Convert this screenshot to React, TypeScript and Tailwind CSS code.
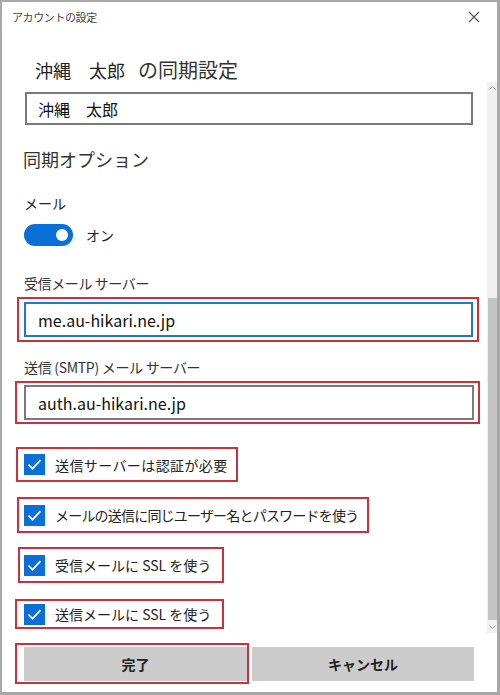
import React from 'react'

// Account sync settings dialog (mail server options)

const font = { fontFamily: '"Noto Sans CJK JP", "Noto Sans", sans-serif' }

function CheckIcon() {
  return (
    <svg width="21" height="21" viewBox="0 0 21 21" className="shrink-0">
      <rect width="21" height="21" fill="#0a6fd6" />
      <path d="M4.5 10.5l4 4.2 8-8.5" fill="none" stroke="#fff" strokeWidth="1.7" />
    </svg>
  )
}

function CloseIcon() {
  return (
    <svg width="12" height="12" viewBox="0 0 12 12">
      <path d="M1 1l10 10M11 1L1 11" stroke="#555" strokeWidth="1.2" />
    </svg>
  )
}

interface CheckRowProps {
  label: string
  className: string
  textClass?: string
}

function CheckRow({ label, className, textClass = '' }: CheckRowProps) {
  return (
    <div className={`flex items-center border-2 border-[#c8333b] gap-[10px] self-start shrink-0 ${className}`}>
      <CheckIcon />
      <span className={`text-[14px] leading-[20px] text-[#222] whitespace-nowrap ${textClass}`}>{label}</span>
    </div>
  )
}

export default function App() {
  return (
    <div
      className="w-[500px] h-[695px] bg-white border-2 border-r-[3px] border-b-[3px] border-[#a8a8a8] flex flex-col overflow-hidden"
      style={font}
    >
      {/* title bar */}
      <div className="h-[30px] flex items-center justify-between pl-[10px] pr-[17px] shrink-0">
        <span className="text-[11px] text-[#444] tracking-[-0.4px]">アカウントの設定</span>
        <CloseIcon />
      </div>

      {/* heading */}
      <div className="h-[50px] pt-[26px] pl-[33px] shrink-0">
        <div className="leading-[24px] text-[#222] whitespace-nowrap flex items-baseline">
          <span className="text-[18px]">沖縄　太郎</span>
          <span className="text-[20px] text-[#333] ml-[13px]">の同期設定</span>
        </div>
      </div>

      {/* scrolling settings area */}
      <div className="h-[551px] flex shrink-0">
        <div className="flex-1 flex flex-col overflow-hidden pt-[10px]">
          <div className="ml-[23px] w-[448px] h-[33px] border-2 border-[#7a7a7a] flex items-center px-[11px] text-[16px] text-[#111] shrink-0">
            沖縄　太郎
          </div>

          <div className="ml-[21px] mt-[22px] text-[18px] leading-[24px] text-[#333]">同期オプション</div>

          <div className="ml-[22px] mt-[22px] text-[14px] leading-[20px] text-[#222]">メール</div>

          <div className="ml-[22px] mt-[11px] flex items-center gap-[13px]">
            <div className="w-[49px] h-[22px] rounded-full bg-[#0a6fd6] flex items-center justify-end pr-[5px]">
              <div className="w-[12px] h-[12px] rounded-full bg-white" />
            </div>
            <span className="text-[14px] text-[#222]">オン</span>
          </div>

          <div className="ml-[22px] mt-[27px] text-[14px] leading-[20px] text-[#333] tracking-[-0.4px]">
            受信メール サーバー
          </div>

          <div className="ml-[15px] mt-[4px] w-[462px] border-2 border-[#c8333b] pl-[5px] pr-[4px] py-[3px] shrink-0">
            <div className="h-[35px] border-2 border-[#1f78cf] flex items-center px-[12px] text-[16px] text-[#111]">
              me.au-hikari.ne.jp
            </div>
          </div>

          <div className="ml-[22px] mt-[15px] text-[14px] leading-[20px] text-[#333] tracking-[-0.3px]">
            送信 (SMTP) メール サーバー
          </div>

          <div className="ml-[13px] mt-[4px] w-[465px] border-2 border-[#c8333b] pl-[7px] pr-[4px] py-[2px] shrink-0">
            <div className="h-[35px] border-2 border-[#7a7a7a] flex items-center px-[12px] text-[16px] text-[#111]">
              auth.au-hikari.ne.jp
            </div>
          </div>

          <CheckRow
            label="送信サーバーは認証が必要"
            className="ml-[14px] mt-[23px] w-[222px] h-[35px] pl-[6px]"
            textClass="tracking-[0.4px]"
          />
          <CheckRow
            label="メールの送信に同じユーザー名とパスワードを使う"
            className="ml-[15px] mt-[15px] w-[352px] h-[36px] pl-[5px]"
            textClass="tracking-[-0.8px]"
          />
          <CheckRow label="受信メールに SSL を使う" className="ml-[16px] mt-[14px] w-[206px] h-[36px] pl-[4px]" />
          <CheckRow label="送信メールに SSL を使う" className="ml-[13px] mt-[16px] w-[209px] h-[30px] pl-[7px]" />
        </div>

        {/* scrollbar */}
        <div className="w-[10px] flex flex-col bg-[#f0f0f0]">
          <div className="h-[12px] flex items-center justify-center">
            <svg width="7" height="4" viewBox="0 0 7 4">
              <path d="M0.5 3.5l3-3 3 3" fill="none" stroke="#999" strokeWidth="0.9" />
            </svg>
          </div>
          <div className="h-[204px]" />
          <div className="h-[322px] ml-[1px] bg-[#c4c4c4]" />
          <div className="h-[13px] flex items-center justify-center">
            <svg width="7" height="4" viewBox="0 0 7 4">
              <path d="M0.5 0.5l3 3 3-3" fill="none" stroke="#999" strokeWidth="0.9" />
            </svg>
          </div>
        </div>
      </div>

      {/* footer buttons */}
      <div className="flex-1 flex items-start pt-[10px] pl-[13px]">
        <div className="border-2 border-[#c8333b] pl-[7px] pt-[2px] pb-[1px]">
          <button className="w-[223px] h-[34px] bg-[#cccccc] text-[14px] font-semibold text-[#222]">完了</button>
        </div>
        <button className="ml-[3px] mt-[4px] w-[222px] h-[34px] bg-[#cccccc] text-[14px] font-semibold text-[#222]">
          キャンセル
        </button>
      </div>
    </div>
  )
}
